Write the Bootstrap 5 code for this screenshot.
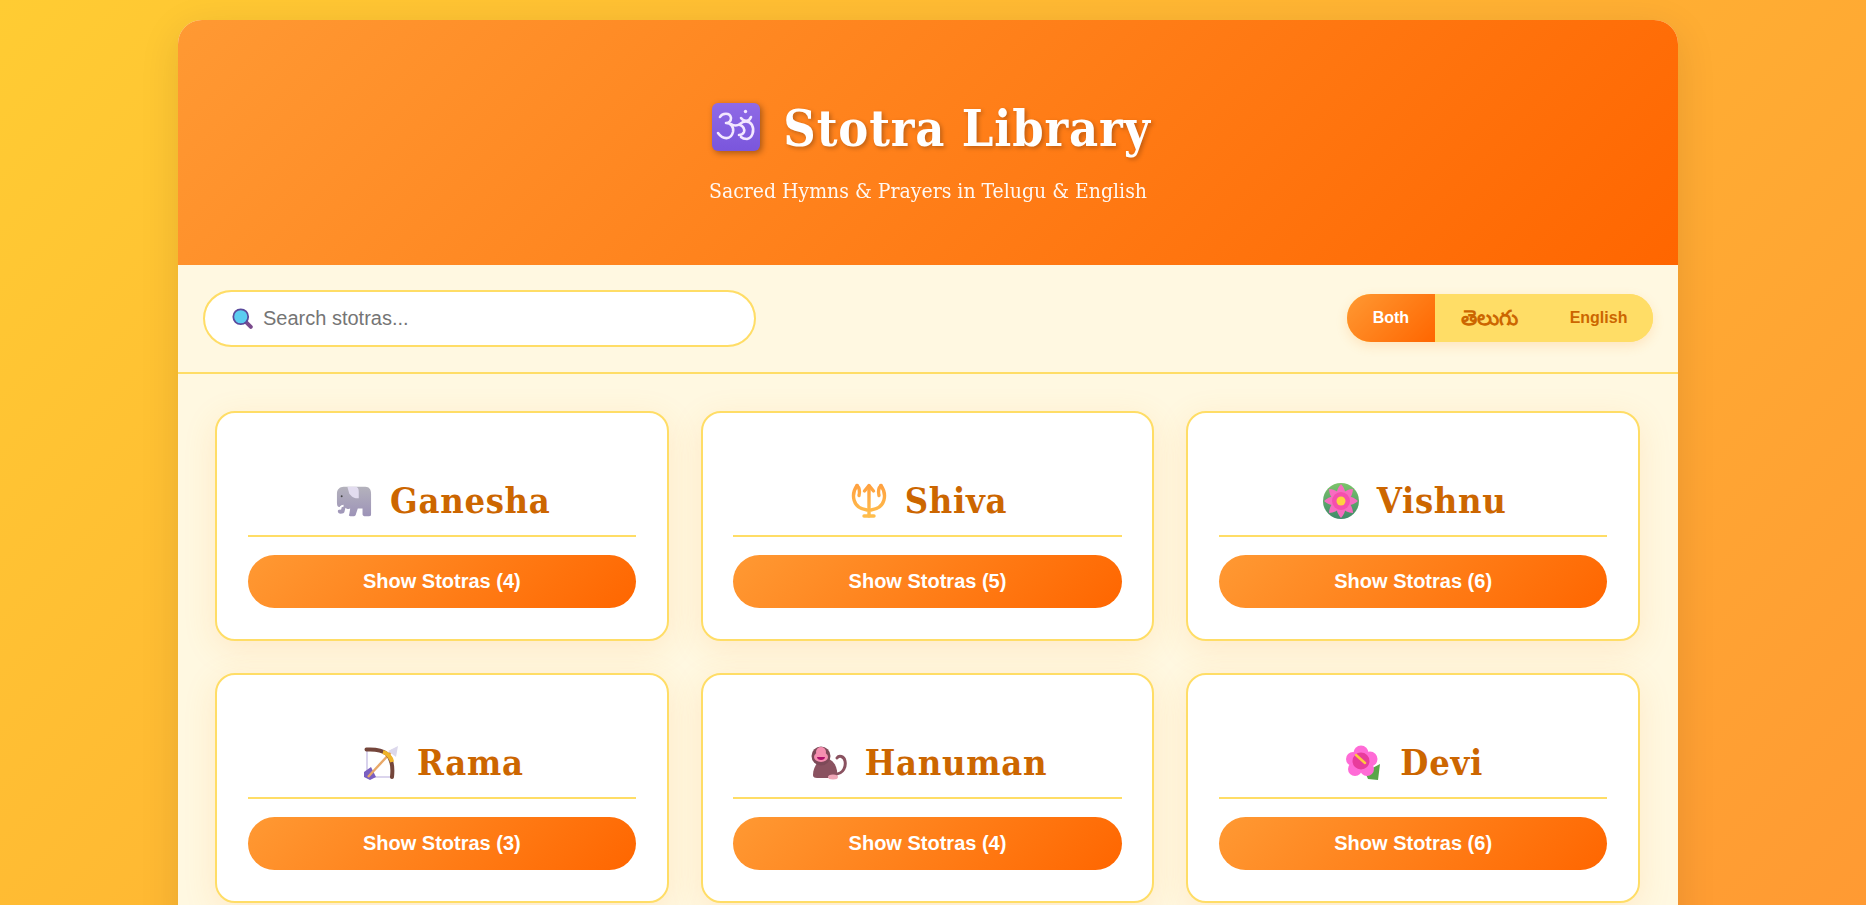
<!DOCTYPE html>
<html lang="en">
<head>
<meta charset="UTF-8">
<title>Stotra Library</title>
<link rel="stylesheet" href="https://cdn.jsdelivr.net/npm/bootstrap@5.3.0/dist/css/bootstrap.min.css">
<style>
body { background: linear-gradient(135deg, #ffcc33, #ff9933); font-family: "Liberation Sans", Arial, sans-serif; min-height: 100vh; padding: 20px 30px 20px 20px; }
.shell { width: 1500px; margin: 0 auto; background: #fff8e1; border-radius: 24px; box-shadow: 0 10px 40px rgba(0,0,0,.1); overflow: hidden; }
.top-head { height: 245px; background: linear-gradient(135deg, #ff9933, #ff6600); color: #fff; padding-top: 79px; text-align: center; font-family: "DejaVu Serif", serif; font-stretch: condensed; }
.top-head h1 { font-size: 50px; font-weight: 700; line-height: 60px; margin: 0 0 17px; letter-spacing: .85px; text-indent: 6px; text-shadow: 2px 2px 4px rgba(0,0,0,.25); }
.top-head p { font-size: 21px; line-height: 30px; margin: 0; opacity: .95; }
.om-ico { width: 50px; height: 50px; margin-right: 22px; vertical-align: -6px; filter: drop-shadow(2px 2px 3px rgba(0,0,0,.35)); }
.tools { height: 109px; padding: 0 25px; border-bottom: 2px solid #ffdd66; }
.search-wrap { width: 553px; }
.search-box { height: 57px; border: 2px solid #ffdd66; border-radius: 29px; padding: 0 20px 0 58px; font-size: 20px; box-shadow: none; }
.search-box::placeholder { color: #757575; }
.search-box:focus { border-color: #ffdd66; box-shadow: none; }
.search-ico { position: absolute; left: 29px; top: 18px; width: 21px; height: 21px; }
.lang-group { border-radius: 24px; overflow: hidden; box-shadow: 0 4px 12px rgba(255,153,51,.2); background: #ffdd66; margin-bottom: 2px; }
.lang-btn { height: 48px; border: 0; background: #ffdd66; color: #cc6600; font-weight: 700; font-size: 16px; padding: 0 25.6px; border-radius: 0; }
.lang-btn:hover { background: #ffdd66; color: #cc6600; }
.lang-btn.on, .lang-btn.on:hover { background: linear-gradient(135deg, #ff9933, #ff6600); color: #fff; }
.lang-btn.telugu { font-size: 21px; padding: 0 26.2px; }
.deck { display: grid; grid-template-columns: repeat(3, 1fr); gap: 32px; padding: 37px 38px 38px 37px; }
.god-card { height: 230px; background: #fff; border: 2px solid #ffdd66; border-radius: 20px; padding: 0 30.5px; box-shadow: 0 8px 32px rgba(255,153,51,.15); }
.god-card h2 { margin: 63px 0 0; padding-bottom: 11px; border-bottom: 2px solid #ffdd66; text-align: center; text-indent: 3px; color: #cc6600; font-family: "DejaVu Serif", serif; font-stretch: condensed; font-weight: 700; font-size: 36px; line-height: 48px; letter-spacing: .7px; }
.god-ico { width: 36px; height: 36px; margin-right: 18px; vertical-align: -6px; }
.show-btn { display: block; width: 100%; height: 53px; margin-top: 18px; padding: 0 0 2px; border: 0; border-radius: 27px; color: #fff; font-weight: 700; font-size: 20px; background: linear-gradient(135deg, #ff9933, #ff6600); }
.show-btn:hover { color: #fff; background: linear-gradient(135deg, #ff9933, #ff6600); }
</style>
</head>
<body>
<div class="shell">
  <div class="top-head">
    <h1><svg class="om-ico" viewBox="0 0 50 50"><defs><linearGradient id="omg" x1="0" y1="0" x2="0" y2="1"><stop offset="0" stop-color="#8f6ae6"/><stop offset="1" stop-color="#7a56dc"/></linearGradient></defs><rect x="1" y="1" width="48" height="48" rx="6" fill="url(#omg)"/><g fill="none" stroke="#f3e8ff" stroke-width="2.6" stroke-linecap="round" stroke-linejoin="round"><path d="M9 15c2-4 10-5 11 1 0 3-2 5-5 5 5 0 8 4 7 9-2 8-10 8-15 1"/><path d="M20 22c3 2 6 2 9 0 3-3 9-4 12 1 3 6 0 13-5 14-3 0-5-1-6-2"/><path d="M29 23c3 1 5 4 4 7-1 2-3 3-5 3"/><path d="M30 16c3 4 8 4 10-1"/></g><circle cx="34.5" cy="9.5" r="1.7" fill="#f3e8ff"/></svg>Stotra Library</h1>
    <p>Sacred Hymns &amp; Prayers in Telugu &amp; English</p>
  </div>

  <div class="tools d-flex align-items-center justify-content-between">
    <div class="search-wrap position-relative">
      <input type="text" class="form-control search-box" placeholder="Search stotras...">
      <svg class="search-ico" viewBox="0 0 24 24"><path d="M15.5 15.5l6 6" stroke="#7a4a8c" stroke-width="4.5" stroke-linecap="round"/><circle cx="10" cy="10" r="8.5" fill="#5bcdf0" stroke="#5a4a9c" stroke-width="2"/></svg>
    </div>
    <div class="lang-group d-flex">
      <button type="button" class="btn lang-btn on">Both</button>
      <button type="button" class="btn lang-btn telugu">తెలుగు</button>
      <button type="button" class="btn lang-btn">English</button>
    </div>
  </div>

  <div class="deck">
    <div class="god-card">
      <h2><svg class="god-ico" viewBox="0 0 38 38"><defs><linearGradient id="ele" x1="0" y1="0" x2="0" y2="1"><stop offset="0" stop-color="#b4b2bc"/><stop offset="1" stop-color="#9d93b8"/></linearGradient></defs><path d="M8 4h23c4 0 6 3 6 7v22c0 2-1 2-2 2h-5c-1 0-2-1-2-2v-6h-5l-2 6c0 1-1 2-2 2h-4c-1 0-2-1-1-2l1-6c-2 1-4 0-5-1l-1 4c0 2-4 3-6 2-2-2-1-4 1-4l1-3c-3 1-4-1-4-4V11c0-4 3-7 7-7z" fill="url(#ele)"/><path d="M12 4h8c3 0 4 2 4 5v7c-4 1-8-2-10-5z" fill="#e2dcef"/><circle cx="6" cy="14" r="1" fill="#444"/><path d="M8 24c-3 0-4 2-3 4" stroke="#fff" stroke-width="2" fill="none"/></svg>Ganesha</h2>
      <button type="button" class="btn show-btn">Show Stotras (4)</button>
    </div>
    <div class="god-card">
      <h2><svg class="god-ico" viewBox="0 0 36 36"><defs><linearGradient id="tri" gradientUnits="userSpaceOnUse" x1="0" y1="0" x2="0" y2="36"><stop offset="0" stop-color="#ff9f3f"/><stop offset="1" stop-color="#ffc04d"/></linearGradient></defs><g fill="none" stroke="url(#tri)" stroke-width="3.4" stroke-linecap="round" stroke-linejoin="round"><path d="M18 3v30"/><path d="M13.5 8L18 2.500l4.500 5.500"/><path d="M6 2.500C0 11 1 25 16 27M30 2.500C36 11 35 25 20 27"/><path d="M6 2.500c3 3 3 6 2 10M30 2.500c-3 3-3 6-2 10"/><path d="M13 33h10"/></g></svg>Shiva</h2>
      <button type="button" class="btn show-btn">Show Stotras (5)</button>
    </div>
    <div class="god-card">
      <h2><svg class="god-ico" viewBox="0 0 36 36"><defs><linearGradient id="pad" x1="0" y1="0" x2="0" y2="1"><stop offset="0" stop-color="#7cc46a"/><stop offset="1" stop-color="#3f8a6a"/></linearGradient></defs><circle cx="18" cy="18" r="18" fill="url(#pad)"/><g fill="#f76cc0"><path id="pt" d="M18 18C12 12 13 7 18 1c5 6 6 11 0 17z"/><use href="#pt" transform="rotate(45 18 18)"/><use href="#pt" transform="rotate(90 18 18)"/><use href="#pt" transform="rotate(135 18 18)"/><use href="#pt" transform="rotate(180 18 18)"/><use href="#pt" transform="rotate(225 18 18)"/><use href="#pt" transform="rotate(270 18 18)"/><use href="#pt" transform="rotate(315 18 18)"/></g><circle cx="18" cy="18" r="9" fill="#f54fae"/><circle cx="18" cy="18" r="4.500" fill="#ffd23f"/></svg>Vishnu</h2>
      <button type="button" class="btn show-btn">Show Stotras (6)</button>
    </div>
    <div class="god-card">
      <h2><svg class="god-ico" viewBox="0 0 36 36"><path d="M4 5v27h25" fill="none" stroke="#cfc8e8" stroke-width="1.6"/><path d="M1 27l7-5 5 10-6 3-6-3z" fill="#7a5fc0"/><path d="M5 32L30 5" stroke="#e8a868" stroke-width="2.400"/><path d="M25 6l10-5-2 11-4-3z" fill="#dcd8ec"/><path d="M3.500 4.500C12 4 19 5 24 9c5 5 6 14 5 23" fill="none" stroke="#74453a" stroke-width="4" stroke-linecap="round"/><path d="M20 7c4 1 8 5 9 10" fill="none" stroke="#f0b429" stroke-width="4.200"/></svg>Rama</h2>
      <button type="button" class="btn show-btn">Show Stotras (3)</button>
    </div>
    <div class="god-card">
      <h2><svg class="god-ico" viewBox="0 0 36 36"><path d="M24 29c9 0 11-8 10-13-1-5-6-6-8-3" fill="none" stroke="#8a5260" stroke-width="3" stroke-linecap="round"/><path d="M10 14c9-3 18 5 16 19H8c-3 0-6 0-6-3 0-6 3-12 8-16z" fill="#8a5260"/><circle cx="10" cy="11" r="9.500" fill="#7d4a58"/><circle cx="10" cy="7" r="5" fill="#f58fb0"/><ellipse cx="10" cy="12" rx="7" ry="5" fill="#f58fb0"/><path d="M6 12h8c0 4-8 4-8 0z" fill="#b0106c"/><ellipse cx="22" cy="32" rx="5" ry="2.500" fill="#f0a8b8"/></svg>Hanuman</h2>
      <button type="button" class="btn show-btn">Show Stotras (4)</button>
    </div>
    <div class="god-card">
      <h2><svg class="god-ico" viewBox="0 0 36 36"><path d="M19 27l15-8-2 16-10-1z" fill="#5aa64a"/><g fill="#ff6bd6"><circle cx="15" cy="8" r="7.500"/><circle cx="24" cy="14" r="7.500"/><circle cx="21" cy="24" r="7"/><circle cx="9" cy="24" r="7"/><circle cx="7" cy="14" r="7"/></g><circle cx="15" cy="16" r="8.500" fill="#e83c9c"/><path d="M10 10l9 8" stroke="#ffc83d" stroke-width="2.500" stroke-linecap="round"/></svg>Devi</h2>
      <button type="button" class="btn show-btn">Show Stotras (6)</button>
    </div>
  </div>
</div>
<script src="https://cdn.jsdelivr.net/npm/bootstrap@5.3.0/dist/js/bootstrap.bundle.min.js"></script>
</body>
</html>
